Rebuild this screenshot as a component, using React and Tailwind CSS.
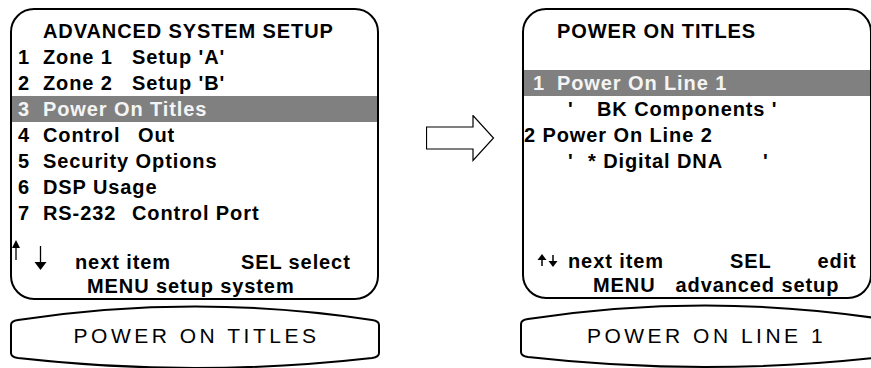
import React from "react";

// menu screens: advanced setup -> power on titles
const leftRows = [
  { n: "1", a: "Zone 1", b: "Setup 'A'" },
  { n: "2", a: "Zone 2", b: "Setup 'B'" },
  { n: "3", a: "Power On Titles", active: true },
  { n: "4", a: "Control", b: "Out" },
  { n: "5", a: "Security Options" },
  { n: "6", a: "DSP Usage" },
  { n: "7", a: "RS-232", b: "Control Port" },
];

const Oval = ({ label }) => (
  <div className="relative mt-[3px] flex h-[66px] w-[370px] items-center justify-center">
    <svg className="absolute inset-0" width="370" height="66" viewBox="0 0 370 66">
      <path
        d="M1 22 Q1 18 8 17 Q185 -10 362 17 Q369 18 369 22 L369 50 Q369 54 362 55 Q185 75 8 55 Q1 54 1 50 Z"
        fill="none"
        stroke="#000"
        strokeWidth="2"
      />
    </svg>
    <span className="relative pl-[3px] pt-[2px] text-[21px] font-normal tracking-[3.5px] text-black">{label}</span>
  </div>
);

const UpDown = () => (
  <svg width="40" height="34" viewBox="0 0 40 34">
    <line x1="4" y1="4" x2="4" y2="20" stroke="#000" strokeWidth="1.3" />
    <path d="M0 8 L4 0 L8 8 Z" fill="#000" />
    <line x1="28.5" y1="6" x2="28.5" y2="23" stroke="#000" strokeWidth="1.3" />
    <path d="M22.5 22 L28.5 30 L34.5 22 Z" fill="#000" />
  </svg>
);

const SmallUpDown = () => (
  <svg width="22" height="13" viewBox="0 0 22 13" className="mb-[2px]">
    <line x1="5" y1="3" x2="5" y2="12" stroke="#000" strokeWidth="1.5" />
    <path d="M0.5 6 L5 0 L9.5 6 Z" fill="#000" />
    <line x1="16" y1="1" x2="16" y2="9" stroke="#000" strokeWidth="1.5" />
    <path d="M11.5 7 L16 13 L20.5 7 Z" fill="#000" />
  </svg>
);

export default function App() {
  return (
    <div className="flex h-[368px] w-[871px] overflow-hidden bg-white font-['Liberation_Sans',Arial,sans-serif] text-[20px] font-bold leading-[26px] tracking-[0.9px] text-black">
      {/* left screen */}
      <div className="ml-[10px] mt-[8px] flex w-[370px] shrink-0 flex-col">
        <div className="flex h-[294px] w-[369px] flex-col rounded-[24px] border-2 border-black pt-[8px]">
          <div className="pl-[31px]">ADVANCED SYSTEM SETUP</div>
          {leftRows.map((r) => (
            <div
              key={r.n}
              className={`flex h-[26px] whitespace-pre pl-[6px] ${r.active ? "bg-[#808080] text-[#f4f4f4]" : ""}`}
            >
              <span className="w-[25px]">{r.n}</span>
              {r.b ? (
                <>
                  <span className={r.n === "4" ? "w-[95px]" : "w-[89px]"}>{r.a}</span>
                  <span>{r.b}</span>
                </>
              ) : (
                <span>{r.a}</span>
              )}
            </div>
          ))}
          <div className="mt-auto">
            <div className="flex h-[34px] items-end whitespace-pre leading-[24px]">
              <UpDown />
              <span className="ml-[23px]">next item</span>
              <span className="ml-[70px]">SEL select</span>
            </div>
            <div className="h-[24px] pl-[75px] leading-[24px]">MENU setup system</div>
          </div>
        </div>
        <Oval label="POWER ON TITLES" />
      </div>

      {/* arrow */}
      <div className="w-[142px] shrink-0 pl-[46px] pt-[115px]">
        <svg width="69" height="47" viewBox="0 0 69 47">
          <path d="M0.5 12 H47 V0.5 L67.5 23 L47 45.5 V34 H0.5 Z" fill="#fff" stroke="#000" strokeWidth="1.2" />
        </svg>
      </div>

      {/* right screen */}
      <div className="mt-[8px] flex w-[370px] shrink-0 flex-col">
        <div className="flex h-[294px] w-[350px] flex-col rounded-[24px] border-2 border-black pt-[8px]">
          <div className="pl-[33px]">POWER ON TITLES</div>
          <div className="h-[26px]" />
          <div className="flex h-[26px] bg-[#808080] pl-[9px] text-[#f4f4f4]">
            <span className="w-[24px]">1</span>
            <span>Power On Line 1</span>
          </div>
          <div className="flex h-[26px] pl-[44px]">
            <span className="w-[29px]">'</span>
            <span className="whitespace-pre">BK Components '</span>
          </div>
          <div className="h-[26px] whitespace-pre">2 Power On Line 2</div>
          <div className="flex h-[26px] pl-[44px]">
            <span className="w-[20px]">'</span>
            <span className="w-[175px]">* Digital DNA</span>
            <span>'</span>
          </div>
          <div className="mt-auto">
            <div className="flex h-[24px] items-center whitespace-pre pl-[13px] leading-[24px]">
              <SmallUpDown />
              <span className="ml-[9px]">next item</span>
              <span className="ml-[66px]">SEL</span>
              <span className="ml-[46px]">edit</span>
            </div>
            <div className="flex h-[24px] pl-[69px] leading-[24px]">
              <span>MENU</span>
              <span className="ml-[20px]">advanced setup</span>
            </div>
          </div>
        </div>
        <div className="-ml-[2px]">
          <Oval label="POWER ON LINE 1" />
        </div>
      </div>
    </div>
  );
}
